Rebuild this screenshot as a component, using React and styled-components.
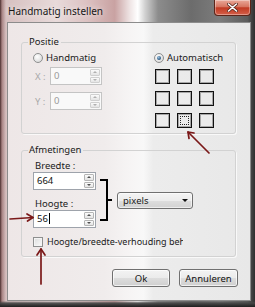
import React from 'react';
import styled, { createGlobalStyle, css } from 'styled-components';

const Global = createGlobalStyle`
  html, body { margin: 0; padding: 0; background: #5a5a5a; }
  body { width: 255px; height: 307px; overflow: hidden; font-family: "Noto Sans", "Open Sans", sans-serif; }
  * { box-sizing: border-box; }
`;

const Window = styled.div`
  position: relative;
  width: 255px;
  height: 307px;
  display: flex;
  flex-direction: column;
  overflow: hidden;
  background:
    linear-gradient(180deg, rgba(0,0,0,0) 301px, rgba(70,70,70,0.9) 303px, #1e1e1e 307px),
    linear-gradient(90deg, #4a2e2e 0px, #a88484 2px, #d6c0c0 6px, #e8dada 22%, #dcc2c2 34%, #c9a2a2 45%, #efe5e5 51%, #ffffff 54%, #cfcfcf 57%, #8c8c8c 62%, #6c6c6c 75%, #7c7c7c 86%, #5c5c5c 97%, #2e2e2e 100%);
`;

const TitleBar = styled.div`
  height: 22px;
  display: flex;
  justify-content: space-between;
  align-items: flex-start;
  flex: none;
`;

const Title = styled.span`
  margin: 5px 0 0 8px;
  font-size: 10px;
  line-height: 13px;
  color: #161616;
  text-shadow: 0 0 6px rgba(255,255,255,0.9);
`;

const CloseButton = styled.div`
  width: 37px;
  height: 16px;
  margin-right: 4px;
  border: 1px solid #5c2418;
  border-top: none;
  border-radius: 0 0 4px 4px;
  background: linear-gradient(180deg, #e9a898 0%, #d77560 45%, #c13a22 52%, #d4604a 100%);
  box-shadow: inset 0 0 0 1px rgba(255,255,255,0.35);
  display: flex;
  align-items: center;
  justify-content: center;
`;

const Client = styled.div`
  flex: 1;
  margin: 0 4px 6px 7px;
  border: 1px solid #8c8c8c;
  padding: 13px 12px 13px 13px;
  display: flex;
  flex-direction: column;
  color: #1a1a1a;
  font-size: 9.5px;
  background: linear-gradient(90deg, #eee7e7 0%, #f0ecec 40%, #f6f4f4 50%, #f8f8f8 56%, #ececec 60%, #e8e8e8 100%);
`;

const Group = styled.fieldset`
  margin: ${p => p.$mt || 0}px 2px 0 0;
  padding: 0;
  min-inline-size: 0;
  border: 1px solid #d2d2d2;
  border-radius: 3px;
  box-shadow: 1px 1px 0 rgba(255,255,255,0.7);
`;

const Legend = styled.legend`
  margin-left: 6px;
  padding: 0 2px 0 1px;
  font-size: 9.5px;
  line-height: 12px;
  color: #1a1a1a;
`;

const PosBody = styled.div`
  display: grid;
  grid-template-columns: 121px auto;
  padding: 4px 0 5px 11px;
`;

const Column = styled.div`
  display: flex;
  flex-direction: column;
`;

const OptionLabel = styled.label`
  display: flex;
  align-items: center;
  gap: 3px;
  height: 12px;
  line-height: 12px;
  font-size: 9.5px;
`;

const RadioDot = styled.span`
  position: relative;
  width: 10px;
  height: 10px;
  border-radius: 50%;
  border: 1px solid #8e8f8f;
  background: radial-gradient(circle at 40% 35%, #ffffff 0%, #e6e6e6 55%, #cfcfcf 100%);
  ${p => p.$checked && css`
    &::after {
      content: '';
      position: absolute;
      inset: 2px;
      border-radius: 50%;
      background: radial-gradient(circle at 40% 35%, #9cc0dc 0%, #3a6a94 55%, #173a5a 100%);
    }
  `}
`;

const FieldRow = styled.div`
  display: flex;
  align-items: center;
  margin-top: ${p => p.$mt}px;
  padding-left: 2px;
`;

const AxisLabel = styled.span`
  width: 15px;
  font-size: 9.5px;
  color: #a8a8a8;
`;

const SpinBox = styled.div`
  display: flex;
  width: ${p => p.$w}px;
  height: 18px;
  border: 1px solid ${p => (p.$disabled ? '#c4c4c4' : '#9ea3ab')};
  background: ${p => (p.$disabled ? '#f9f9f9' : '#ffffff')};
`;

const SpinValue = styled.span`
  flex: 1;
  padding-left: 3px;
  font-size: 9.5px;
  line-height: 16px;
  color: ${p => (p.$disabled ? '#9a9a9a' : '#111')};
`;

const Caret = styled.span`
  display: inline-block;
  width: 1px;
  height: 11px;
  background: #000;
  vertical-align: -2px;
  margin-left: 1px;
`;

const SpinButtons = styled.div`
  width: 10px;
  margin: 1px 1px 1px 0;
  display: flex;
  flex-direction: column;
  gap: 1px;
`;

const SpinButton = styled.div`
  flex: 1;
  border: 1px solid ${p => (p.$disabled ? '#d0d0d0' : '#b5b5b5')};
  border-radius: 1px;
  background: linear-gradient(180deg, #fbfbfb, #e4e4e4);
  display: flex;
  align-items: center;
  justify-content: center;
  &::after {
    content: '';
    border-left: 2px solid transparent;
    border-right: 2px solid transparent;
    ${p => (p.$up
      ? css`border-bottom: 2px solid ${p.$disabled ? '#b0b0b0' : '#505050'};`
      : css`border-top: 2px solid ${p.$disabled ? '#b0b0b0' : '#505050'};`)}
  }
`;

const AnchorGrid = styled.div`
  margin: 5px 0 0 1px;
  display: grid;
  grid-template-columns: repeat(3, 15px);
  grid-auto-rows: 15px;
  gap: 7px 7px;
`;

const AnchorCell = styled.div`
  position: relative;
  border: 1px solid #111;
  box-shadow: inset 0 0 0 1px rgba(40,40,40,0.35);
  ${p => p.$selected && css`
    &::after {
      content: '';
      position: absolute;
      inset: 2px;
      border: 1px dotted #222;
    }
  `}
`;

const SizeBody = styled.div`
  padding: 4px 0 8px 11px;
  display: flex;
  flex-direction: column;
`;

const SizeRow = styled.div`
  display: flex;
  align-items: flex-start;
`;

const FieldLabel = styled.span`
  height: 12px;
  line-height: 12px;
  padding-left: 2px;
  font-size: 9.5px;
  margin-top: ${p => p.$mt || 0}px;
`;

const Bracket = styled.svg`
  margin: 19px 0 0 4px;
  flex: none;
`;

const Dropdown = styled.div`
  margin: 32px 0 0 4px;
  width: 76px;
  height: 17px;
  border: 1px solid #707070;
  border-radius: 3px;
  background: linear-gradient(180deg, #f4f4f4 0%, #ececec 50%, #dedede 51%, #d2d2d2 100%);
  box-shadow: inset 0 0 0 1px rgba(255,255,255,0.6);
  display: flex;
  align-items: center;
  justify-content: space-between;
  padding: 0 4px 0 5px;
  font-size: 9.5px;
  &::after {
    content: '';
    border-left: 3px solid transparent;
    border-right: 3px solid transparent;
    border-top: 3px solid #111;
  }
`;

const CheckRow = styled.label`
  margin-top: 8px;
  display: flex;
  align-items: center;
  gap: 4px;
  height: 12px;
`;

const CheckBox = styled.span`
  flex: none;
  width: 10px;
  height: 10px;
  border: 1px solid #8e8f8f;
  background: linear-gradient(135deg, #dcdcdc, #fbfbfb);
  box-shadow: inset 0 0 0 1px #f4f4f4;
`;

const CheckText = styled.span`
  width: 136px;
  overflow: hidden;
  white-space: nowrap;
  font-size: 9px;
  line-height: 12px;
`;

const ButtonRow = styled.div`
  margin-top: 12px;
  display: flex;
  justify-content: flex-end;
  gap: 9px;
`;

const Button = styled.div`
  width: ${p => p.$w}px;
  height: 18px;
  border: 1px solid #707070;
  border-radius: 3px;
  background: linear-gradient(180deg, #f3f3f3 0%, #ebebeb 50%, #dddddd 51%, #cfcfcf 100%);
  box-shadow: inset 0 0 0 1px rgba(255,255,255,0.7);
  display: flex;
  align-items: center;
  justify-content: center;
  font-size: 9.5px;
  color: #111;
`;

const Annotations = styled.svg`
  position: absolute;
  left: 0;
  top: 0;
  pointer-events: none;
`;

function Spin({ value, width, disabled, caret }) {
  return (
    <SpinBox $w={width} $disabled={disabled}>
      <SpinValue $disabled={disabled}>{value}{caret && <Caret />}</SpinValue>
      <SpinButtons>
        <SpinButton $up $disabled={disabled} />
        <SpinButton $disabled={disabled} />
      </SpinButtons>
    </SpinBox>
  );
}

export default function App() {
  return (
    <>
      <Global />
      <Window>
        <TitleBar>
          <Title>Handmatig instellen</Title>
          <CloseButton>
            <svg width="11" height="9" viewBox="0 0 11 9">
              <path d="M1.5 1 L9.5 8 M9.5 1 L1.5 8" stroke="#5a2a20" strokeWidth="3" strokeLinecap="round" />
              <path d="M1.5 1 L9.5 8 M9.5 1 L1.5 8" stroke="#ffffff" strokeWidth="1.6" strokeLinecap="round" />
            </svg>
          </CloseButton>
        </TitleBar>
        <Client>
          <Group>
            <Legend>Positie</Legend>
            <PosBody>
              <Column>
                <OptionLabel><RadioDot />Handmatig</OptionLabel>
                <FieldRow $mt={3}>
                  <AxisLabel>X :</AxisLabel>
                  <Spin value="0" width={52} disabled />
                </FieldRow>
                <FieldRow $mt={7}>
                  <AxisLabel>Y :</AxisLabel>
                  <Spin value="0" width={52} disabled />
                </FieldRow>
              </Column>
              <Column>
                <OptionLabel><RadioDot $checked />Automatisch</OptionLabel>
                <AnchorGrid>
                  {Array.from({ length: 9 }, (_, i) => (
                    <AnchorCell key={i} $selected={i === 7} />
                  ))}
                </AnchorGrid>
              </Column>
            </PosBody>
          </Group>
          <Group $mt={10}>
            <Legend>Afmetingen</Legend>
            <SizeBody>
              <SizeRow>
                <Column>
                  <FieldLabel>Breedte :</FieldLabel>
                  <Spin value="664" width={63} />
                  <FieldLabel $mt={8}>Hoogte :</FieldLabel>
                  <Spin value="56" width={63} caret />
                </Column>
                <Bracket width="13" height="42" viewBox="0 0 13 42">
                  <path d="M0 1 H7 V41 H0 M7 21 H12" stroke="#000" strokeWidth="2" fill="none" />
                </Bracket>
                <Dropdown>pixels</Dropdown>
              </SizeRow>
              <CheckRow>
                <CheckBox />
                <CheckText>Hoogte/breedte-verhouding behouden</CheckText>
              </CheckRow>
            </SizeBody>
          </Group>
          <ButtonRow>
            <Button $w={58}>Ok</Button>
            <Button $w={59}>Annuleren</Button>
          </ButtonRow>
        </Client>
        <Annotations width="255" height="307" viewBox="0 0 255 307">
          <g stroke="#7a1818" strokeWidth="1.7" strokeLinecap="round" strokeLinejoin="round" fill="none">
            <path d="M209 153 L188 132" />
            <path d="M189 138.5 L188 132 L194 133" />
            <path d="M10 219 L33 217.5" />
            <path d="M27 214 L33 217.5 L27.5 221" />
            <path d="M41 284 L41 249" />
            <path d="M37 255 L41 249 L45 255" />
          </g>
        </Annotations>
      </Window>
    </>
  );
}
